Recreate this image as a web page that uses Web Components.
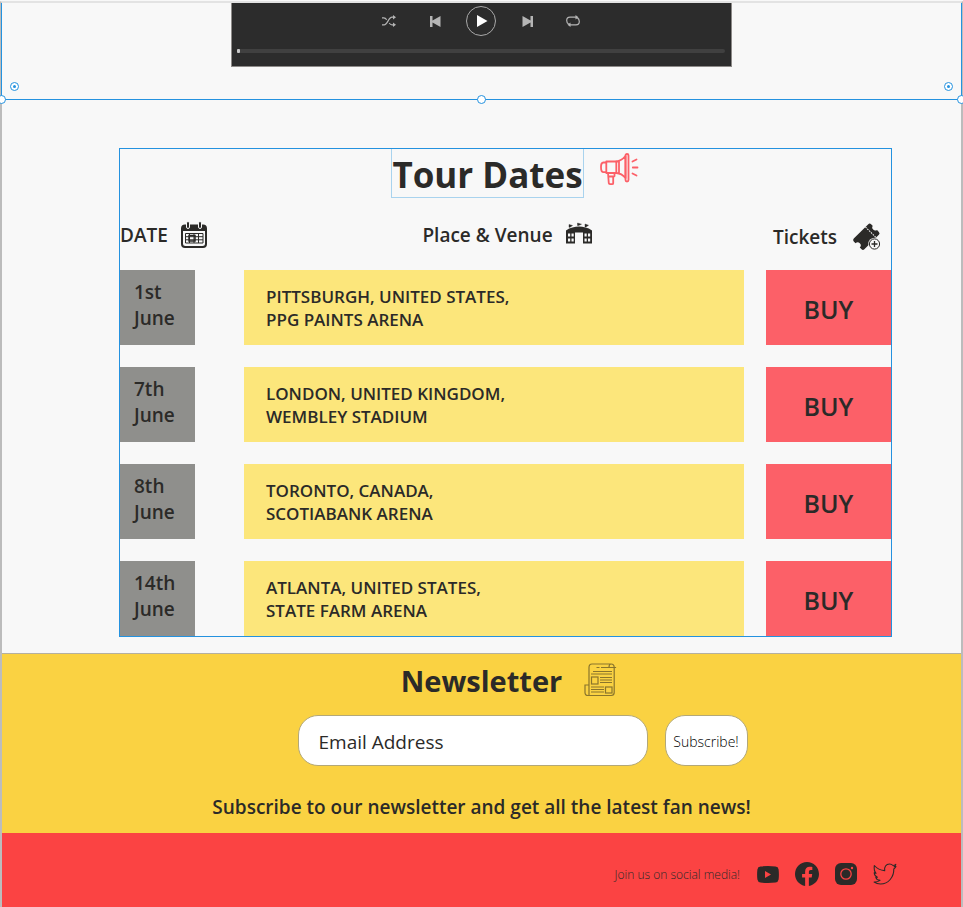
<!DOCTYPE html>
<html lang="en">
<head>
<meta charset="utf-8">
<meta name="viewport" content="width=device-width, initial-scale=1">
<title>Tour Dates</title>
<style>
  :root {
    --ink: #2b2a28;
    --paper: #f8f8f8;
    --blue: #2492df;
    --coral: #fc6068;
  }
  body {
    margin: 0;
    background: var(--paper);
    color: var(--ink);
    font-family: "Open Sans", "Noto Sans", sans-serif;
  }
</style>
</head>
<body>
<fan-page>
  <player-panel></player-panel>
  <tour-dates></tour-dates>
  <newsletter-signup></newsletter-signup>
  <social-footer></social-footer>
</fan-page>

<script>
const define = (name, html, setup) => {
  const template = document.createElement('template');
  template.innerHTML = `<style>:host,*{box-sizing:border-box}</style>${html}`;
  customElements.define(name, class extends HTMLElement {
    constructor() {
      super();
      this.attachShadow({ mode: 'open' }).append(template.content.cloneNode(true));
    }
    connectedCallback() { if (setup) setup(this, this.shadowRoot); }
  });
};

const icons = {
  shuffle: ['0 0 14 12', `<g fill="none" stroke="currentColor" stroke-width="1.2"><path d="M0 9.8h2.2C5.500 9.800 6.500 2.200 10 2.200h2M0 2.800h1.800c1.400 0 2.200.9 2.900 2M7.200 8c.8 1.100 1.600 1.800 2.800 1.800h2"/></g><path d="M11 0l3 2.200-3 2.200zM11 7.600l3 2.200-3 2.200z" fill="currentColor"/>`],
  prev: ['0 0 11 11', `<path d="M0 0h2.500v4.600L10.500 0v11L2.500 6.400V11H0z" fill="currentColor"/>`],
  next: ['0 0 11 11', `<path d="M11 0H8.500v4.600L.5 0v11l8-4.600V11H11z" fill="currentColor"/>`],
  play: ['0 0 12 12', `<path d="M1 0l10.500 6L1 12z" fill="#fff"/>`],
  repeat: ['0 0 14 12', `<path d="M10 2.200H4C1.800 2.200.7 3.500.7 5.500c0 1.900.7 3 2 3.600M4 9.800h6c2.200 0 3.300-1.300 3.300-3.300 0-1.900-.7-3-2-3.600" fill="none" stroke="currentColor" stroke-width="1.200"/><path d="M9.500 0l3 2.200-3 2.200zM4.500 7.600l-3 2.200 3 2.200z" fill="currentColor"/>`],
  megaphone: ['0 0 38 32', `<g fill="none" stroke="#fc6068" stroke-width="1.800" stroke-linejoin="round" stroke-linecap="round"><rect x="6.300" y="8.500" width="10" height="11.500"/><path d="M6.300 9.500H3.500C1.500 9.500 1 11 1 14.200s.5 5 2.500 5h2.800M16.300 8.500C20 8 23 6 25.500 3v22c-2.500-3-5.500-4.700-9.200-5M19 8v12"/><rect x="25.500" y="1" width="3" height="27.500" rx="1.500"/><path d="M8 20l.8 10.200c.1.800.6 1 1.200 1h2c.7 0 1.200-.3 1.200-1V24l1.300-1v-3M8.500 23.500h4.500M32.500 8.500l4-2M32.800 14.500h4.700M32.500 20.500l4 2"/></g>`],
  calendar: ['0 0 26 26', `<path d="M4 2.500h18a4 4 0 014 4V22a4 4 0 01-4 4H4a4 4 0 01-4-4V6.500a4 4 0 014-4z" fill="currentColor"/><path d="M2 9h22v12.500a2.500 2.500 0 01-2.500 2.500h-17A2.500 2.500 0 012 21.500z" fill="#f8f8f8"/><g fill="currentColor" stroke="#f8f8f8" stroke-width="1"><rect x="5.500" y="-.5" width="3" height="7" rx="1.500"/><rect x="17.500" y="-.5" width="3" height="7" rx="1.500"/></g><path d="M4.500 11.500H22v9.500H4.500zM4.500 14.700H22M4.500 17.800H22M8.500 11.500V21M13 11.500V21M17.500 11.500V21" fill="none" stroke="currentColor" stroke-width="1"/><rect x="8" y="13.500" width="6" height="5.500" fill="none" stroke="currentColor" stroke-width="1.500"/>`],
  venue: ['0 0 26 21', `<path d="M0 7.500C4 4.500 9 3.500 13 3.500S22 4.500 26 7.500V20.500H17V9.500H9v11H0z" fill="currentColor"/><path d="M2 10.500h2.200v3H2zm3.500 0h2.200v3H5.500zM2 15.500h2.200v3H2zm3.500 0h2.200v3H5.500zM18.500 10.500h2.200v3h-2.200zm3.500 0h2.200v3H22zM18.500 15.500h2.200v3h-2.200zm3.500 0h2.200v3H22z" fill="#f8f8f8"/><path d="M3 1.500l3.500 1L4 4.300H3zM11.500 0l4 1.200-3 1.300h-1zM19 1l3.500 1.300L20 4h-1z" fill="currentColor" stroke="currentColor" stroke-width=".4"/>`],
  ticket: ['0 0 26 25', `<g transform="rotate(-45 11.500 11.500)" fill="currentColor"><path d="M1 4H21.500a2 2 0 012 2v2.200a3.200 3.200 0 000 6.200V17a2 2 0 01-2 2H1a2 2 0 01-2-2v-2.500a3 3 0 000-6V6a2 2 0 012-2z"/><path d="M17.500 4v15" stroke="#f8f8f8" stroke-width="1" stroke-dasharray="1.600 1"/></g><circle cx="19.500" cy="19" r="6.200" fill="#f8f8f8"/><circle cx="19.500" cy="19" r="5.100" fill="none" stroke="currentColor"/><path d="M16.500 19h6M19.500 16v6" stroke="currentColor" stroke-width="1.300"/>`],
  paper: ['0 0 32 34', `<g fill="none" stroke="#8a752c" stroke-width="1.200"><path d="M5 32.500V4.500C5 2.200 6 1 8 1h19c2 0 3.200 1 3.200 3.500v25c0 2-1 3-3 3H4c-2 0-3-1-3-3V22h4M30 4.500h1.500V4M27 1c-1.500 0-2 1.500-2 3.500h5.500M9 8.500h19M7 11h21M16 14.500h12M16 17h12M16 19.500h12M7 24h13M7 26.500h13M7 29h13M12.500 4.500h3M17 4.500h8"/><rect x="7.500" y="14" width="6.500" height="7"/><rect x="21.500" y="24" width="6.500" height="6"/></g>`],
  youtube: ['0 0 22 17', `<path d="M3.500.5Q11-.4 18.500.5 21.300.8 21.600 3.400q.6 5 0 10.200-.4 2.600-3.100 2.900-7.500.9-15 0Q.8 16.200.4 13.600-.2 8.400.4 3.400.7.8 3.500.5z" fill="currentColor"/><path d="M8 5v7l6-3.500z" fill="#fb4343"/>`],
  facebook: ['0 0 24 24', `<path d="M24 12.070C24 5.410 18.630 0 12 0S0 5.400 0 12.070C0 18.100 4.390 23.100 10.130 24v-8.440H7.080v-3.490h3.040V9.410c0-3.020 1.800-4.700 4.540-4.700 1.310 0 2.680.24 2.680.24v2.970h-1.500c-1.500 0-1.960.93-1.960 1.890v2.260h3.320l-.53 3.500h-2.800V24C19.620 23.100 24 18.100 24 12.070" fill="currentColor"/>`],
  instagram: ['0 0 22 22', `<rect width="22" height="22" rx="6" fill="currentColor"/><circle cx="11" cy="11" r="5.200" fill="none" stroke="#fb4343" stroke-width="1.300"/><circle cx="17" cy="5" r="1.200" fill="#fb4343"/>`],
  twitter: ['0 0 24 22', `<path d="M23 3.500c-.5 1-1.200 1.700-2.200 2.500C21 14 15.500 21 7.500 21c-2.300 0-4.500-.6-6.400-1.900 2.200.1 4.200-.4 5.900-1.700-2-.2-3.600-1.300-4.200-3.100h1.600C2.400 13.400 1.300 12 1.200 9.800c.6.300 1.200.5 1.900.5C1.200 8.600.9 6 1.300 2.500 4 5.500 7.500 7.200 11.700 7.600 11 4 13 1 16.500 1c1.500 0 2.700.6 3.500 1.500 1-.2 2-.6 2.800-1.100-.2 1-.9 1.900-1.700 2.400.7 0 1.300-.2 1.900-.3z" fill="none" stroke="currentColor" stroke-width="1.100" stroke-linejoin="round"/>`]
};

define('fan-icon', `
  <style>:host{display:inline-flex;flex:none} svg{display:block;width:100%;height:100%;overflow:visible}</style>
  <svg aria-hidden="true"></svg>`,
  (host, root) => {
    const [box, body] = icons[host.getAttribute('name')];
    const [, , w, h] = box.split(' ');
    host.style.width = w + 'px';
    host.style.height = h + 'px';
    const svg = root.querySelector('svg');
    svg.setAttribute('viewBox', box);
    svg.innerHTML = body;
  });

define('fan-page', `
  <style>
    :host{display:block;border-top:2px solid #e3e3e3;margin-top:1px;min-height:calc(100vh - 1px);
      border-left:2px solid #bcbcbc;border-right:2px solid #bcbcbc}
  </style>
  <slot></slot>`);

define('player-panel', `
  <style>
    :host{display:block;position:relative;height:97px;padding:0 229px;margin:0 -1px;
      border:1px solid var(--blue);border-top:0}
    .player{max-width:501px;margin:0 auto;height:64px;padding:3px 6px 0 5px;background:#2c2c2c;
      border:1px solid #8d8a88;border-top:0;color:#b5b5b5}
    .controls{display:flex;justify-content:center;gap:16px}
    button{width:30px;height:30px;padding:0;border:0;background:none;color:inherit;
      display:flex;align-items:center;justify-content:center}
    .play{border:1px solid #a9a9a9;border-radius:50%;padding-left:2px}
    input{display:block;-webkit-appearance:none;appearance:none;width:100%;height:4px;margin:13px 0 0;
      background:#404040;border-radius:2px}
    input::-webkit-slider-thumb{-webkit-appearance:none;width:3px;height:4px;background:#c8c8c8;border-radius:1px}
    .handle{position:absolute;width:9px;height:9px;border:1px solid var(--blue);border-radius:50%;background:#fff}
    .l{left:-5px;bottom:-5px}.c{left:calc(50% - 5px);bottom:-5px}.r{right:-5px;bottom:-5px}
    .knob{display:grid;place-items:center;bottom:8px}
    .knob::after{content:"";width:3px;height:3px;background:var(--blue);border-radius:50%}
    .kl{left:8px}.kr{right:8px}
  </style>
  <div class="player">
    <div class="controls">
      <button aria-label="Shuffle"><fan-icon name="shuffle"></fan-icon></button>
      <button aria-label="Previous"><fan-icon name="prev"></fan-icon></button>
      <button class="play" aria-label="Play"><fan-icon name="play"></fan-icon></button>
      <button aria-label="Next"><fan-icon name="next"></fan-icon></button>
      <button aria-label="Repeat"><fan-icon name="repeat"></fan-icon></button>
    </div>
    <input type="range" min="0" max="100" value="0" aria-label="Track position">
  </div>
  <i class="handle l"></i><i class="handle c"></i><i class="handle r"></i>
  <i class="handle knob kl"></i><i class="handle knob kr"></i>`);

define('tour-dates', `
  <style>
    :host{display:grid;grid-template-columns:117px minmax(0,1fr) 69px;padding:48px 0 16px}
    .frame{grid-column:2;border:1px solid var(--blue)}
    .title{display:flex;justify-content:center;gap:16px;padding-left:18px}
    h2{margin:0;padding-top:4px;border:1px solid #a9d3ee;border-top:0;font-size:35px;line-height:44px;font-weight:700;white-space:nowrap}
    .title fan-icon{margin-top:4px}
    table{width:100%;border-collapse:collapse;table-layout:fixed}
    .c1{width:124px}.c3{width:147px}
    th,td{padding:0;text-align:left;vertical-align:top}
    th{height:72px;font-size:19px;line-height:26px;font-weight:600;padding-top:24px}
    th div{display:flex;align-items:center;gap:13px}
    th:nth-child(2) div{justify-content:center;padding-left:26px}
    th:nth-child(2) fan-icon{margin-bottom:4px}
    th:nth-child(3){padding-left:29px;padding-top:26px}
    th:nth-child(3) div{gap:18px}
    tbody td{padding-bottom:22px}
    tbody tr:last-child td{padding-bottom:0}
    td:nth-child(3){padding-left:22px}
    .date,.venue,button{display:block;height:75px;font-weight:600}
    .date{width:75px;padding:9px 0 0 14px;background:#8f8f8c;font-size:19px;line-height:26px}
    .venue{padding:15px 0 0 22px;background:#fce67b;font-size:17px;line-height:23px}
    button{width:100%;padding:2px 0 0;border:0;background:var(--coral);color:inherit;font-family:inherit;font-size:25px}
  </style>
  <div class="frame">
    <div class="title"><h2>Tour Dates</h2><fan-icon name="megaphone"></fan-icon></div>
    <table>
      <colgroup><col class="c1"><col><col class="c3"></colgroup>
      <thead><tr>
        <th scope="col"><div>DATE <fan-icon name="calendar"></fan-icon></div></th>
        <th scope="col"><div>Place &amp; Venue <fan-icon name="venue"></fan-icon></div></th>
        <th scope="col"><div>Tickets <fan-icon name="ticket"></fan-icon></div></th>
      </tr></thead>
      <tbody></tbody>
    </table>
  </div>`,
  (host, root) => {
    root.querySelector('tbody').innerHTML = [
      ['1st', 'PITTSBURGH, UNITED STATES,', 'PPG PAINTS ARENA'],
      ['7th', 'LONDON, UNITED KINGDOM,', 'WEMBLEY STADIUM'],
      ['8th', 'TORONTO, CANADA,', 'SCOTIABANK ARENA'],
      ['14th', 'ATLANTA, UNITED STATES,', 'STATE FARM ARENA']
    ].map(([day, city, arena]) => `<tr>
      <td><div class="date">${day}<br>June</div></td>
      <td><div class="venue">${city}<br>${arena}</div></td>
      <td><button type="button">BUY</button></td></tr>`).join('');
  });

define('newsletter-signup', `
  <style>
    :host{display:block;height:180px;background:#fad242;border-top:1px solid #b5b0a0}
    .title{display:flex;justify-content:center;gap:22px;padding:9px 0 0 54px}
    h2{margin:0;font-size:29px;line-height:36px;font-weight:700}
    form{display:flex;justify-content:center;gap:17px;padding:16px 0 0 82px}
    input,button{height:51px;border:1px solid #b3a878;border-radius:20px;background:#fff;color:var(--ink);font-family:inherit}
    input{width:350px;min-width:0;padding:2px 20px 0;font-size:19px}
    input::placeholder{color:var(--ink);opacity:1}
    button{width:83px;padding:2px 0 0;font-size:14px;font-weight:300;color:#000}
    p{margin:28px 0 0;text-align:center;font-size:19px;line-height:26px;font-weight:600}
  </style>
  <div class="title"><h2>Newsletter</h2><fan-icon name="paper"></fan-icon></div>
  <form onsubmit="return false">
    <input type="email" placeholder="Email Address" aria-label="Email Address">
    <button>Subscribe!</button>
  </form>
  <p>Subscribe to our newsletter and get all the latest fan news!</p>`);

define('social-footer', `
  <style>
    :host{display:flex;justify-content:flex-end;align-items:center;height:74px;padding:8px 64px 0 0;background:#fb4343;font-size:12px;font-weight:300}
    nav{display:flex;gap:15px;margin-left:16px}
    a{display:flex;align-items:center;justify-content:center;width:24px;height:24px;color:var(--ink)}
  </style>
  <span>Join us on social media!</span>
  <nav aria-label="Social media">
    <a href="#youtube" aria-label="YouTube"><fan-icon name="youtube"></fan-icon></a>
    <a href="#facebook" aria-label="Facebook"><fan-icon name="facebook"></fan-icon></a>
    <a href="#instagram" aria-label="Instagram"><fan-icon name="instagram"></fan-icon></a>
    <a href="#twitter" aria-label="Twitter"><fan-icon name="twitter"></fan-icon></a>
  </nav>`);
</script>
</body>
</html>
